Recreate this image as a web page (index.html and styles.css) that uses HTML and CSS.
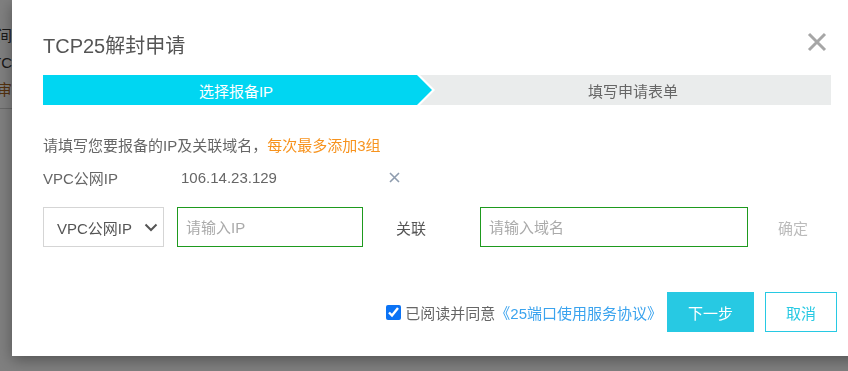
FILE: index.html
```html
<!DOCTYPE html>
<html lang="zh-CN">
  <head>
    <meta charset="UTF-8" />
    <meta name="viewport" content="width=device-width, initial-scale=1.0" />
    <title>TCP25解封申请</title>
    <link rel="stylesheet" href="styles.css">
  </head>
  <body>
    <!-- page behind the modal -->
    <div class="page">
      <p class="pageLine lineA">间</p>
      <p class="pageLine lineB">TCP</p>
      <p class="pageLine lineC">审</p>
      <div class="pageRule"></div>
    </div>
    <div class="mask"></div>

    <div class="dialog">
      <div class="dialogHead">
        <h2 class="dialogTitle">TCP25解封申请</h2>
        <button class="closeBtn" type="button" aria-label="关闭">
          <svg width="20" height="20" viewBox="0 0 20 20">
            <path d="M2 2 L18 18 M18 2 L2 18" stroke="#a6a6a6" stroke-width="3" fill="none" />
          </svg>
        </button>
      </div>

      <div class="steps">
        <div class="stepOn"><span class="stepLabel">选择报备IP</span></div>
        <div class="stepOff">填写申请表单</div>
      </div>

      <p class="tip">请填写您要报备的IP及关联域名，<span class="tipWarn">每次最多添加3组</span></p>

      <div class="ipRow">
        <span class="ipType">VPC公网IP</span>
        <span class="ipValue">106.14.23.129</span>
        <button class="delBtn" type="button" aria-label="删除">
          <svg width="11" height="11" viewBox="0 0 11 11">
            <path d="M1 1 L10 10 M10 1 L1 10" stroke="#8e9cae" stroke-width="1.6" fill="none" />
          </svg>
        </button>
      </div>

      <div class="formRow">
        <div class="selectBox">
          <span>VPC公网IP</span>
          <svg width="14" height="9" viewBox="0 0 14 9">
            <path d="M1.5 1.5 L7 7 L12.5 1.5" stroke="#555" stroke-width="2" fill="none" />
          </svg>
        </div>
        <input class="field fieldIp" type="text" placeholder="请输入IP" />
        <span class="linkLabel">关联</span>
        <input class="field fieldDomain" type="text" placeholder="请输入域名" />
        <span class="okBtn">确定</span>
      </div>

      <div class="dialogFoot">
        <label class="agree">
          <input type="checkbox" checked />
          <span>已阅读并同意</span><a class="agreeLink" href="#">《25端口使用服务协议》</a>
        </label>
        <button class="btn btnPrimary" type="button">下一步</button>
        <button class="btn btnGhost" type="button">取消</button>
      </div>
    </div>
  </body>
</html>
```

FILE: styles.css
```css
body {
  margin: 0;
  height: 371px;
  overflow: hidden;
  background: #fff;
  font-family: "Liberation Sans", "Noto Sans CJK SC", sans-serif;
  font-size: 15px;
  color: #666;
}

.page {
  padding-top: 25px;
  color: #333;
}
.pageLine {
  margin: 0;
  height: 27px;
  line-height: 22px;
  font-size: 15px;
}
.lineA {
  margin-left: -3px;
}
.lineB {
  margin-left: -8px;
}
.lineC {
  margin-left: -3px;
  color: #a8621c;
}
.pageRule {
  margin-top: 2px;
  height: 1px;
  width: 40px;
  background: #d0d0d0;
}

.mask {
  position: fixed;
  inset: 0;
  background: rgba(0, 0, 0, 0.5);
}

.dialog {
  position: fixed;
  left: 12px;
  top: 0;
  width: 788px;
  height: 356px;
  padding: 0 31px;
  background: #fff;
  box-shadow: 0 4px 14px rgba(0, 0, 0, 0.35);
}

.dialogHead {
  display: flex;
  justify-content: space-between;
  align-items: center;
  height: 75px;
}
.dialogTitle {
  margin: 0;
  padding-top: 13px;
  font-size: 20px;
  font-weight: normal;
  color: #555;
}
.closeBtn {
  margin-top: 9px;
  margin-right: 4px;
  padding: 0;
  border: none;
  background: transparent;
  display: flex;
}

.steps {
  display: flex;
  height: 30px;
  background: #eaecec;
}
.stepOn {
  flex: 0 0 392px;
  display: flex;
  background: #fff;
  clip-path: polygon(0 0, 377px 0, 392px 15px, 377px 30px, 0 30px);
}
.stepLabel {
  flex: 1;
  display: flex;
  align-items: center;
  justify-content: center;
  padding-right: 6px;
  background: #00d6f2;
  color: #fff;
  clip-path: polygon(0 0, 374px 0, 389px 15px, 374px 30px, 0 30px);
}
.stepOff {
  flex: 1;
  display: flex;
  align-items: center;
  justify-content: center;
  color: #666;
}

.tip {
  margin: 31px 0 0;
  line-height: 20px;
}
.tipWarn {
  color: #f7931e;
}

.ipRow {
  display: flex;
  align-items: center;
  margin-top: 11px;
  height: 20px;
}
.ipType {
  width: 138px;
}
.ipValue {
  width: 208px;
}
.delBtn {
  padding: 0;
  border: none;
  background: transparent;
  display: flex;
}

.formRow {
  display: flex;
  align-items: center;
  margin-top: 20px;
  height: 40px;
}
.selectBox {
  box-sizing: border-box;
  width: 121px;
  height: 40px;
  display: flex;
  align-items: center;
  justify-content: space-between;
  padding: 0 5px 0 13px;
  border: 1px solid #d5d5d5;
  color: #555;
}
.field {
  box-sizing: border-box;
  height: 40px;
  padding: 0 8px;
  border: 1px solid #1e9a1e;
  outline: none;
  font-family: inherit;
  font-size: 15px;
}
.field::placeholder {
  color: #aaa;
}
.fieldIp {
  width: 186px;
  margin-left: 13px;
}
.linkLabel {
  width: 117px;
  padding-left: 33px;
  box-sizing: border-box;
  color: #555;
}
.fieldDomain {
  width: 268px;
}
.okBtn {
  margin-left: 30px;
  color: #bbb;
}

.dialogFoot {
  display: flex;
  align-items: center;
  justify-content: flex-end;
  gap: 11px;
  margin-top: 45px;
  margin-right: -6px;
}
.agree {
  display: flex;
  align-items: center;
  margin-right: -6px;
  color: #666;
}
.agree input {
  width: 15px;
  height: 15px;
  margin: 0 4px 0 0;
  accent-color: #0b73f5;
}
.agreeLink {
  color: #3aa3ee;
  text-decoration: none;
}
.btn {
  height: 40px;
  font-family: inherit;
  font-size: 15px;
  cursor: pointer;
}
.btnPrimary {
  width: 87px;
  border: none;
  background: #27c9e3;
  color: #fff;
}
.btnGhost {
  width: 72px;
  border: 1px solid #27c9e3;
  background: #fff;
  color: #27c9e3;
}
```
